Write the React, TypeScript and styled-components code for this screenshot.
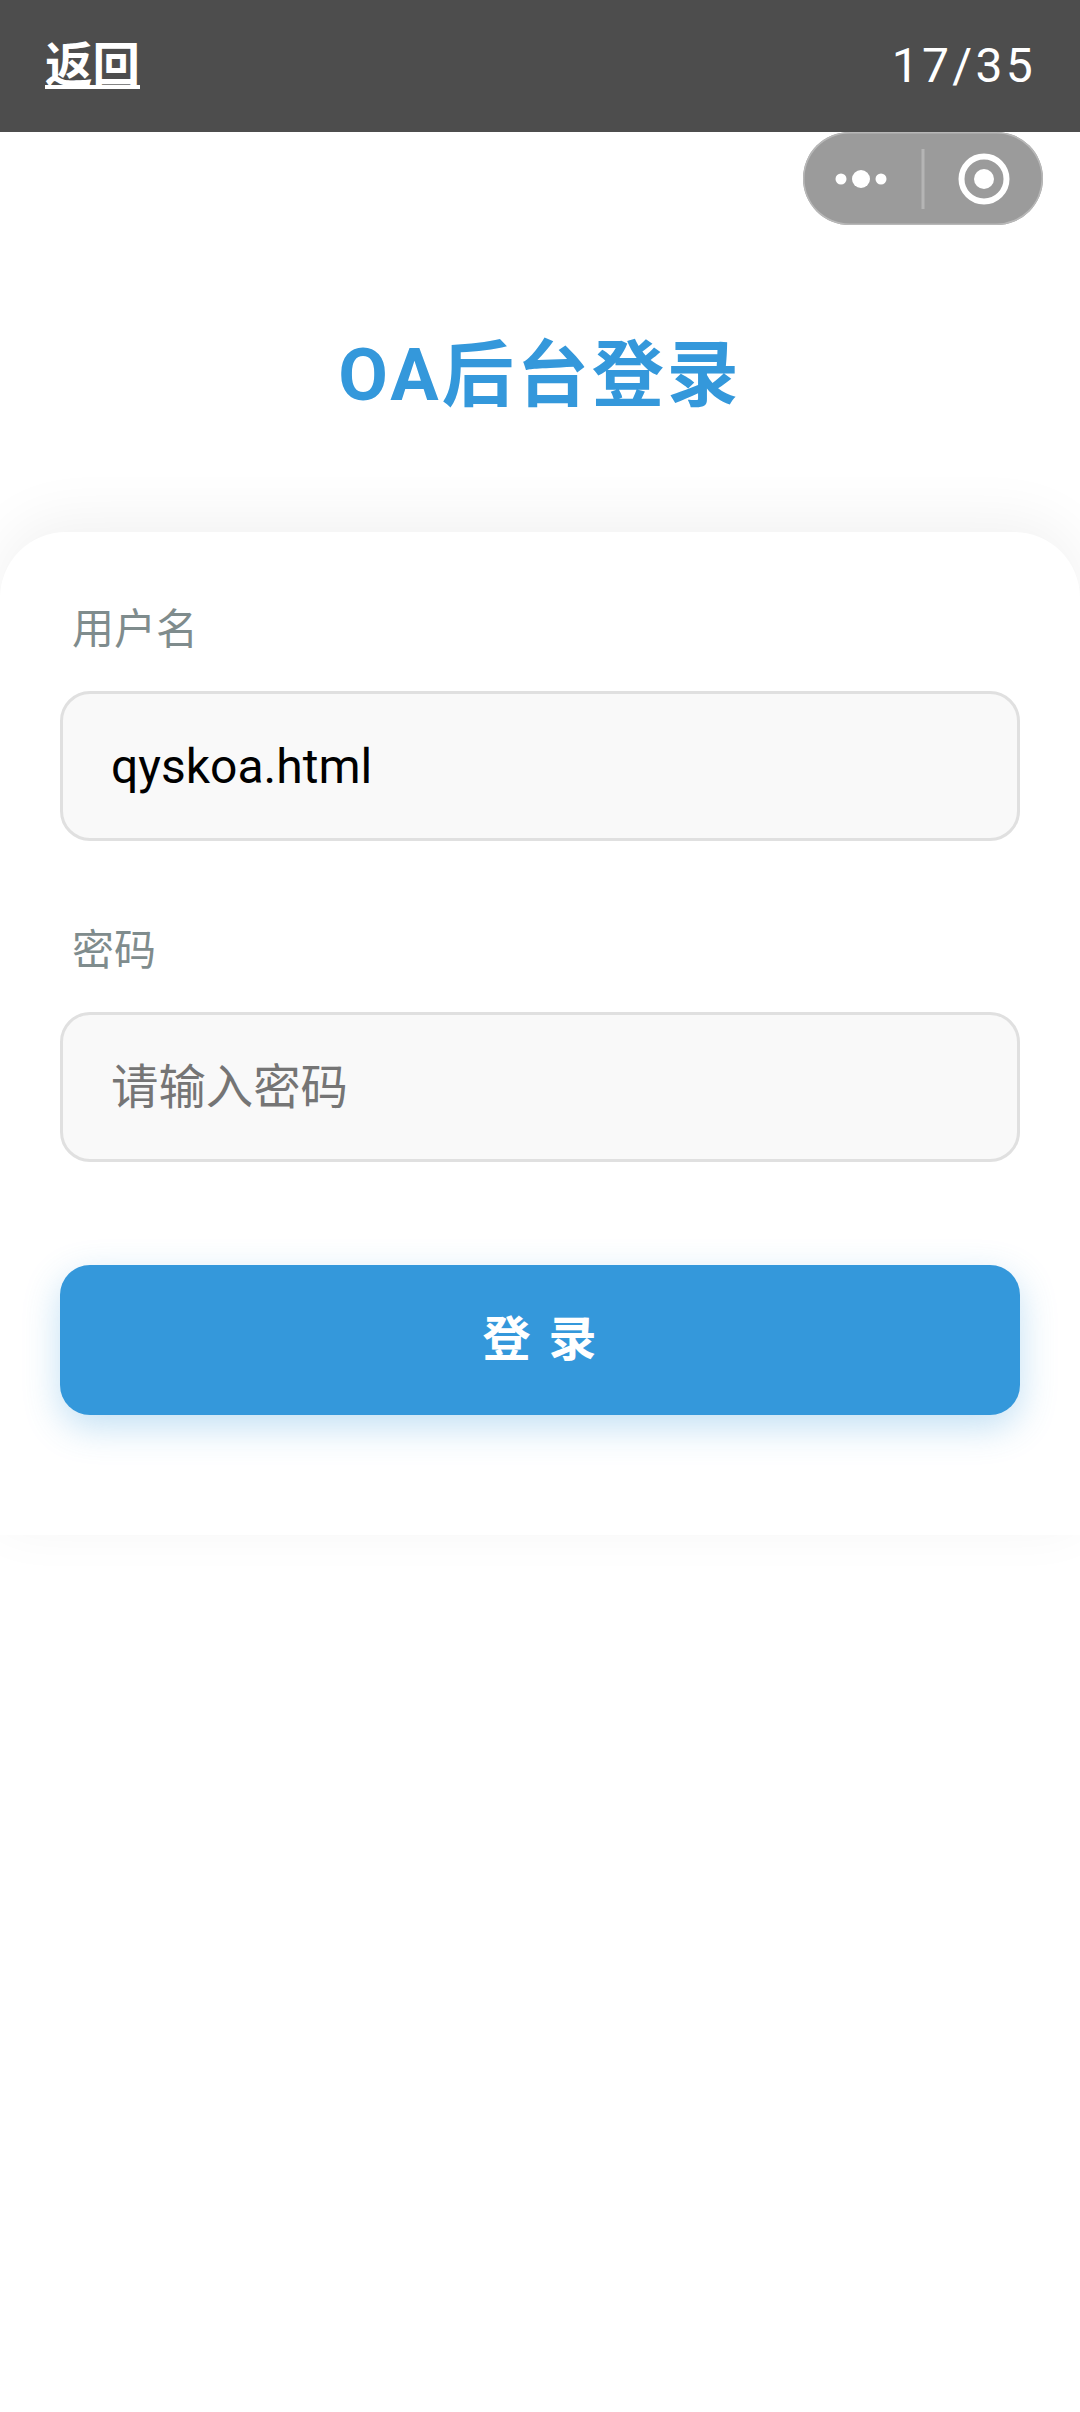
import React from "react";
import styled, { createGlobalStyle } from "styled-components";

const FONT = `Roboto, "Noto Sans CJK SC", "Noto Sans", sans-serif`;

const Global = createGlobalStyle`
  html, body { margin: 0; padding: 0; background: #fff; }
  * { box-sizing: border-box; }
  body { font-family: ${FONT}; }
`;

const Page = styled.div`
  position: relative;
  width: 1080px;
  height: 2412px;
  overflow: hidden;
  background: #fff;
`;

const TopBar = styled.header`
  height: 132px;
  background: #4d4d4d;
  color: #fff;
  display: flex;
  align-items: center;
  justify-content: space-between;
  padding: 0 44px 0 45px;
`;

const BackLink = styled.a`
  font-size: 47.5px;
  font-weight: 700;
  line-height: 64px;
  color: #fff;
  text-decoration: underline;
`;

const Counter = styled.span`
  font-size: 48px;
  font-weight: 400;
  letter-spacing: 3.3px;
  line-height: 64px;
`;

const Capsule = styled.div`
  position: absolute;
  top: 132px;
  left: 803px;
  width: 240px;
  height: 93px;
  border-radius: 47px;
  background: #9b9b9b;
  box-shadow: inset 0 0 0 1.5px #b8b8b8;
  display: flex;
  align-items: center;
  justify-content: center;
`;

const CapsuleIcon = styled.svg`
  display: block;
`;

const TitleBlock = styled.div`
  height: 400px;
  padding-top: 199px;
  display: flex;
  justify-content: center;
`;

const Title = styled.h1`
  margin: 0;
  font-size: 72px;
  line-height: 90px;
  font-weight: 700;
  color: #3498db;
  letter-spacing: 3px;
`;

const Card = styled.main`
  height: 1003px;
  padding: 59px 60px 120px;
  background: #fff;
  border-radius: 66px 66px 0 0;
  box-shadow: 0 -12px 60px rgba(0, 0, 0, 0.06);
`;

const Field = styled.div`
  margin-bottom: 71px;
`;

const Label = styled.label`
  display: block;
  height: 72px;
  line-height: 72px;
  margin-bottom: 28px;
  padding: 3px 0 0 12px;
  font-size: 42px;
  color: #7f8c8d;
`;

const Input = styled.input`
  display: block;
  width: 100%;
  height: 150px;
  padding: 0 48px;
  border: 3px solid #e0e0e0;
  border-radius: 30px;
  background: #f9f9f9;
  outline: none;
  font-family: ${FONT};
  font-size: 48px;
  color: #000;

  &::placeholder {
    color: #757575;
    font-size: 47.4px;
    opacity: 1;
  }
`;

const Submit = styled.button`
  display: block;
  width: 100%;
  height: 150px;
  margin-top: 103px;
  padding: 0 0 10px 2px;
  border: 0;
  border-radius: 30px;
  background: #3498db;
  box-shadow: 0 12px 36px rgba(52, 152, 219, 0.3);
  color: #fff;
  font-family: ${FONT};
  font-size: 48px;
  font-weight: 700;
  letter-spacing: 3px;
`;

export default function App() {
  return (
    <Page>
      <Global />
      <TopBar>
        <BackLink>返回</BackLink>
        <Counter>17/35</Counter>
      </TopBar>
      <Capsule>
        <CapsuleIcon width="240" height="93" viewBox="0 0 240 93" aria-hidden>
          <circle cx="38" cy="47" r="5.5" fill="#fff" />
          <circle cx="58" cy="47" r="9" fill="#fff" />
          <circle cx="78" cy="47" r="5.5" fill="#fff" />
          <rect x="118.5" y="17" width="3" height="60" fill="#b5b5b5" />
          <circle cx="181" cy="47" r="22.5" fill="none" stroke="#fff" strokeWidth="6" />
          <circle cx="181" cy="47" r="10" fill="#fff" />
        </CapsuleIcon>
      </Capsule>
      <TitleBlock>
        <Title>OA后台登录</Title>
      </TitleBlock>
      <Card>
        <Field>
          <Label>用户名</Label>
          <Input readOnly value="qyskoa.html" />
        </Field>
        <Field>
          <Label>密码</Label>
          <Input readOnly placeholder="请输入密码" />
        </Field>
        <Submit>登 录</Submit>
      </Card>
    </Page>
  );
}
